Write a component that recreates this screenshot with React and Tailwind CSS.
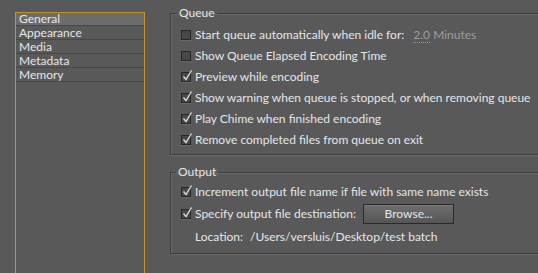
import React from "react";

const font = { fontFamily: "Lato, 'Open Sans', sans-serif" };

function CheckBox({ checked }) {
  return (
    <span className="relative inline-block w-[10px] h-[10px] border border-[#262626] bg-[#484848] shadow-[0_1px_0_#6a6a6a] shrink-0">
      {checked && (
        <svg className="absolute left-[0px] top-[-3px]" width="11" height="11" viewBox="0 0 11 11">
          <path d="M1.5 6.5 L4 9.5 L9.5 0.5" fill="none" stroke="#d8d8d8" strokeWidth="1.4" />
        </svg>
      )}
    </span>
  );
}

function Row({ checked, children, className = "h-[21px]" }) {
  return (
    <div className={`flex items-center gap-[4px] ${className}`}>
      <CheckBox checked={checked} />
      <span className="whitespace-nowrap">{children}</span>
    </div>
  );
}

export default function App() {
  const navItems = ["General", "Appearance", "Media", "Metadata", "Memory"];

  return (
    <div
      className="w-[538px] h-[273px] bg-[#595959] text-[#e4e6ea] text-[12px] leading-[16px] flex overflow-hidden"
      style={font}
    >
      {/* sidebar list */}
      <div className="ml-[15px] mt-[12px] w-[130px] h-[280px] border border-[#c8902a] shrink-0">
        {navItems.map((item, i) => (
          <div
            key={item}
            className={`pl-[3px] border-b border-[#474747] ${
              i === 0 ? "bg-[#6c6c6c] h-[13px] leading-[12px]" : "h-[14px] leading-[13px]"
            }`}
          >
            {item}
          </div>
        ))}
      </div>

      {/* settings */}
      <div className="ml-[25px] mt-[5px] flex flex-col w-[400px] shrink-0">
        <fieldset className="border border-[#3e3e3e] shadow-[1px_1px_0_#6a6a6a,inset_1px_1px_0_#6a6a6a] pl-[10px] pr-[10px] pt-[3px] pb-[4px] h-[150px]">
          <legend className="ml-[-4px] px-[2px]">Queue</legend>
          <Row>
            Start queue automatically when idle for:
            <span className="ml-[9px] text-[#9c9c9c]">
              <span className="border-b border-dotted border-[#9c9c9c]">2.0</span> Minutes
            </span>
          </Row>
          <Row>Show Queue Elapsed Encoding Time</Row>
          <Row checked>Preview while encoding</Row>
          <Row checked>Show warning when queue is stopped, or when removing queue</Row>
          <Row checked>Play Chime when finished encoding</Row>
          <Row checked>Remove completed files from queue on exit</Row>
        </fieldset>

        <fieldset className="mt-[9px] border border-[#3e3e3e] shadow-[1px_1px_0_#6a6a6a,inset_1px_1px_0_#6a6a6a] pl-[10px] pr-[10px] h-[90px]">
          <legend className="ml-[-5px] px-[2px]">Output</legend>
          <Row checked className="h-[21px] mt-[1px]">
            Increment output file name if file with same name exists
          </Row>
          <div className="flex items-center gap-[4px] h-[24px]">
            <CheckBox checked />
            <span className="whitespace-nowrap">Specify output file destination:</span>
            <button className="ml-[3px] w-[91px] h-[20px] border border-[#2a2a2a] bg-gradient-to-b from-[#6e6e6e] to-[#555] text-[#e4e6ea] leading-[16px] shadow-[inset_0_1px_0_#7a7a7a]">
              Browse...
            </button>
          </div>
          <div className="flex items-center h-[22px] pl-[14px] whitespace-nowrap">
            <span>Location:</span>
            <span className="ml-[7px]">/Users/versluis/Desktop/test batch</span>
          </div>
        </fieldset>
      </div>
    </div>
  );
}
